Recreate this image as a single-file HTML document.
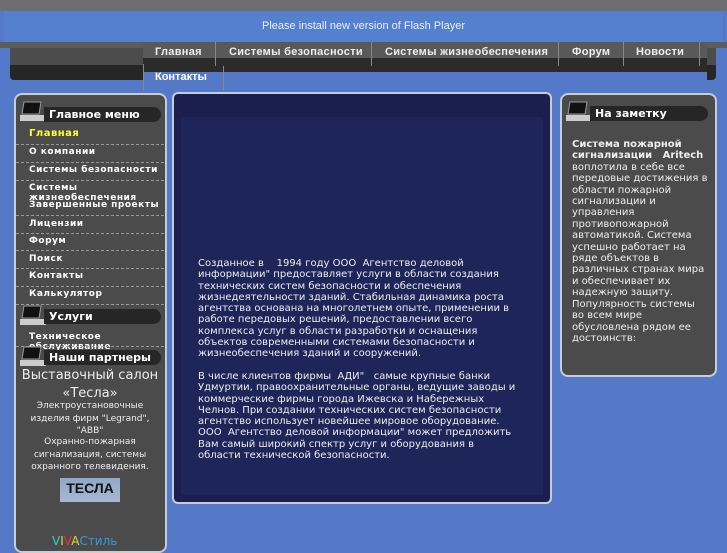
<!DOCTYPE html>
<html><head><meta charset="utf-8"><style>
*{margin:0;padding:0;box-sizing:border-box}
body{width:727px;height:545px;overflow:hidden;background:#5479c8;font-family:"DejaVu Sans","Liberation Sans",sans-serif;position:relative}
.a{position:absolute}
.top{left:0;top:0;width:727px;height:11px;background:#6e6e6e}
.flash{left:4px;top:11px;width:719px;height:31px;background:#5580d0;color:#e8eefc;font-size:11px;text-align:center;line-height:31px;font-family:"Liberation Sans",sans-serif}
.nav1{left:0;top:42px;width:727px;height:6px;background:#5c5c5c}
.lb{left:10px;top:48px;width:133px;height:32px;background:linear-gradient(#4c4c4c 0 17px,#262626 17px);border-radius:0 0 0 4px}
.menu{left:143px;top:42px;width:564px;height:30px;background:linear-gradient(#595959 0 16px,#2b2b2b 16px)}
.menu span{position:absolute;top:4px;color:#eee;font-size:11px;font-weight:bold;font-family:"Liberation Sans",sans-serif;letter-spacing:.3px}
.sep{position:absolute;top:0;width:1px;height:24px;background:#888}
.rb{left:707px;top:48px;width:9px;height:32px;background:linear-gradient(#4c4c4c 0 17px,#262626 17px);border-radius:0 0 4px 0}
.panel{background:#4b4b4b;border:2px solid #c8ccd4;border-radius:8px}
.hd{position:absolute;height:15px;background:#262626;border-radius:0 8px 8px 0;color:#fff;font-size:11px;font-weight:bold;line-height:15px}
.mi{position:absolute;left:29px;color:#fff;font-size:9px;font-weight:bold;letter-spacing:.5px;width:135px}
.ln{position:absolute;left:16px;width:148px;border-top:1px dashed #999}
.c{position:absolute;left:14px;width:152px;text-align:center;color:#eee;font-size:9px;line-height:12.5px}
</style></head><body>
<div class="a top"></div>
<div class="a flash">Please install new version of Flash Player</div>
<div class="a nav1"></div>
<div class="a lb"></div>
<div class="a menu">
<span style="left:12px">Главная</span><div class="sep" style="left:72px"></div>
<span style="left:86px">Системы безопасности</span><div class="sep" style="left:228px"></div>
<span style="left:242px">Системы жизнеобеспечения</span><div class="sep" style="left:415px"></div>
<span style="left:429px">Форум</span><div class="sep" style="left:480px"></div>
<span style="left:493px">Новости</span><div class="sep" style="left:556px"></div>
</div>
<div class="a rb"></div>
<div class="a" style="left:143px;top:64px;width:1px;height:26px;background:#888"></div>
<div class="a" style="left:223px;top:66px;width:1px;height:24px;background:#888"></div>
<div class="a" style="left:155px;top:71px;color:#fff;font-size:11px;font-weight:bold;font-family:'Liberation Sans',sans-serif">Контакты</div>

<!-- left -->
<div class="a panel" style="left:14px;top:93px;width:153px;height:460px"></div>
<svg class="a" style="left:19px;top:101px" width="28" height="22"><path d="M5 1h17l-2 12H3z" fill="#111" stroke="#999"/><path d="M1 14h24l2 6H1z" fill="#ccc"/></svg>
<div class="hd" style="left:44px;top:107px;width:117px;padding-left:5px">Главное меню</div>
<div class="mi" style="top:128px;color:#ffff30;font-size:10px">Главная</div>
<div class="ln" style="top:144px"></div>
<div class="mi" style="top:147px">О компании</div>
<div class="ln" style="top:162px"></div>
<div class="mi" style="top:165px">Системы безопасности</div>
<div class="ln" style="top:180px"></div>
<div class="mi" style="top:183px;line-height:10px">Системы<br>жизнеобеспечения</div>
<div class="mi" style="top:200px">Завершенные проекты</div>
<div class="ln" style="top:215px"></div>
<div class="mi" style="top:219px">Лицензии</div>
<div class="ln" style="top:233px"></div>
<div class="mi" style="top:236px">Форум</div>
<div class="ln" style="top:250px"></div>
<div class="mi" style="top:254px">Поиск</div>
<div class="ln" style="top:268px"></div>
<div class="mi" style="top:271px">Контакты</div>
<div class="ln" style="top:286px"></div>
<div class="mi" style="top:289px">Калькулятор</div>
<div class="ln" style="top:304px"></div>
<svg class="a" style="left:19px;top:305px" width="28" height="22"><path d="M5 1h17l-2 12H3z" fill="#111" stroke="#999"/><path d="M1 14h24l2 6H1z" fill="#ccc"/></svg>
<div class="hd" style="left:44px;top:309px;width:117px;padding-left:5px">Услуги</div>
<div class="mi" style="top:332px;line-height:10px">Техническое<br>обслуживание</div>
<div class="ln" style="top:346px"></div>
<svg class="a" style="left:19px;top:346px" width="28" height="22"><path d="M5 1h17l-2 12H3z" fill="#111" stroke="#999"/><path d="M1 14h24l2 6H1z" fill="#ccc"/></svg>
<div class="hd" style="left:44px;top:350px;width:117px;padding-left:5px">Наши партнеры</div>
<div class="c" style="top:368px;font-size:13px;line-height:16px">Выставочный салон</div>
<div class="c" style="top:386px;font-size:13px;line-height:16px">«Тесла»</div>
<div class="c" style="top:400px">Электроустановочные<br>изделия фирм "Legrand",<br>"ABB"</div>
<div class="c" style="top:436px">Охранно-пожарная<br>сигнализация, системы<br>охранного телевидения.</div>
<div class="a" style="left:60px;top:478px;width:60px;height:24px;background:linear-gradient(#8fa8c8,#a8b8d0);color:#111;font-weight:bold;font-size:14px;text-align:center;line-height:20px;font-family:'Liberation Sans',sans-serif">ТЕСЛА</div>
<div class="a" style="left:52px;top:534px;font-size:12px;color:#2cc"><span style="color:#3cc">V</span><span style="color:#dd3">I</span><span style="color:#e33">V</span><span style="color:#dd3">A</span><span style="color:#39d">Стиль</span></div>

<!-- center -->
<div class="a" style="left:172px;top:92px;width:380px;height:412px;background:#1a1f50;border:2px solid #c8ccd8;border-radius:6px"></div>
<div class="a" style="left:181px;top:117px;width:362px;height:378px;background:#1e2558"></div>
<div class="a" style="left:198px;top:258px;width:320px;color:#eee;font-size:10px;line-height:11.3px">Созданное в &nbsp;&nbsp; 1994 году ООО &nbsp;Агентство деловой информации" предоставляет услуги в области создания технических систем безопасности и обеспечения жизнедеятельности зданий. Стабильная динамика роста агентства основана на многолетнем опыте, применении в работе передовых решений, предоставлении всего комплекса услуг в области разработки и оснащения объектов современными системами безопасности и жизнеобеспечения зданий и сооружений.<br><br style="line-height:5px">В числе клиентов фирмы &nbsp;АДИ" &nbsp; самые крупные банки Удмуртии, правоохранительные органы, ведущие заводы и коммерческие фирмы города Ижевска и Набережных Челнов. При создании технических систем безопасности агентство использует новейшее мировое оборудование.<br>ООО &nbsp;Агентство деловой информации" может предложить Вам самый широкий спектр услуг и оборудования в области технической безопасности.</div>

<!-- right -->
<div class="a panel" style="left:560px;top:93px;width:157px;height:284px"></div>
<svg class="a" style="left:565px;top:101px" width="28" height="22"><path d="M5 1h17l-2 12H3z" fill="#111" stroke="#999"/><path d="M1 14h24l2 6H1z" fill="#ccc"/></svg>
<div class="hd" style="left:590px;top:106px;width:118px;padding-left:5px">На заметку</div>
<div class="a" style="left:572px;top:139px;width:136px;color:#eee;font-size:10px;line-height:11.4px"><b>Система пожарной сигнализации &nbsp;&nbsp;Aritech</b> воплотила в себе все передовые достижения в области пожарной сигнализации и управления противопожарной автоматикой. Система успешно работает на ряде объектов в различных странах мира и обеспечивает их надежную защиту. Популярность системы во всем мире обусловлена рядом ее достоинств:</div>
</body></html>
